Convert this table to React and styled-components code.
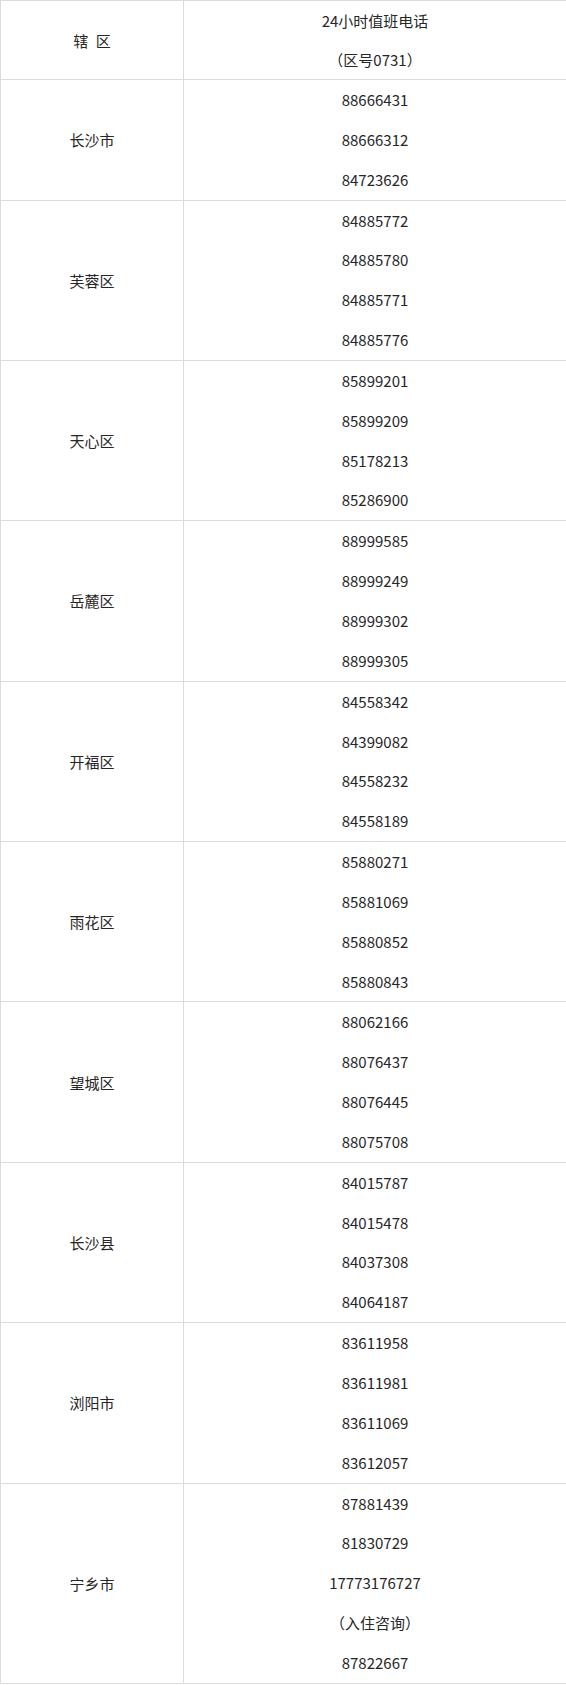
import React from "react";
import styled, { createGlobalStyle } from "styled-components";

const GlobalStyle = createGlobalStyle`
  html, body {
    margin: 0;
    padding: 0;
    background: #ffffff;
  }
  body {
    font-family: "Noto Sans CJK SC", "Noto Sans", sans-serif;
    color: #262626;
  }
`;

const Table = styled.table`
  width: 566px;
  border-collapse: collapse;
  table-layout: fixed;
  font-size: 15px;
  background: #fff;
`;

const Col = styled.col`
  width: ${(p) => p.$w};
`;

const Cell = styled.td`
  border: 1px solid #dcdcdc;
  padding: 0;
  text-align: center;
  vertical-align: middle;
  word-spacing: ${(p) => (p.$spaced ? "4px" : "normal")};
`;

const Line = styled.div`
  line-height: ${(p) => (p.$head ? "39px" : "39.85px")};
  height: ${(p) => (p.$head ? "39px" : "39.85px")};
  white-space: nowrap;
`;

const rows = [
  { name: "长沙市", phones: ["88666431", "88666312", "84723626"] },
  { name: "芙蓉区", phones: ["84885772", "84885780", "84885771", "84885776"] },
  { name: "天心区", phones: ["85899201", "85899209", "85178213", "85286900"] },
  { name: "岳麓区", phones: ["88999585", "88999249", "88999302", "88999305"] },
  { name: "开福区", phones: ["84558342", "84399082", "84558232", "84558189"] },
  { name: "雨花区", phones: ["85880271", "85881069", "85880852", "85880843"] },
  { name: "望城区", phones: ["88062166", "88076437", "88076445", "88075708"] },
  { name: "长沙县", phones: ["84015787", "84015478", "84037308", "84064187"] },
  { name: "浏阳市", phones: ["83611958", "83611981", "83611069", "83612057"] },
  {
    name: "宁乡市",
    phones: ["87881439", "81830729", "17773176727", "（入住咨询）", "87822667"],
  },
];

export default function App() {
  return (
    <>
      <GlobalStyle />
      <Table>
        <colgroup>
          <Col $w="183px" />
          <Col $w="383px" />
        </colgroup>
        <tbody>
          <tr>
            <Cell $spaced>辖 区</Cell>
            <Cell>
              <Line $head>24小时值班电话</Line>
              <Line $head>（区号0731）</Line>
            </Cell>
          </tr>
          {rows.map((r) => (
            <tr key={r.name}>
              <Cell>{r.name}</Cell>
              <Cell>
                {r.phones.map((p) => (
                  <Line key={p}>{p}</Line>
                ))}
              </Cell>
            </tr>
          ))}
        </tbody>
      </Table>
    </>
  );
}
